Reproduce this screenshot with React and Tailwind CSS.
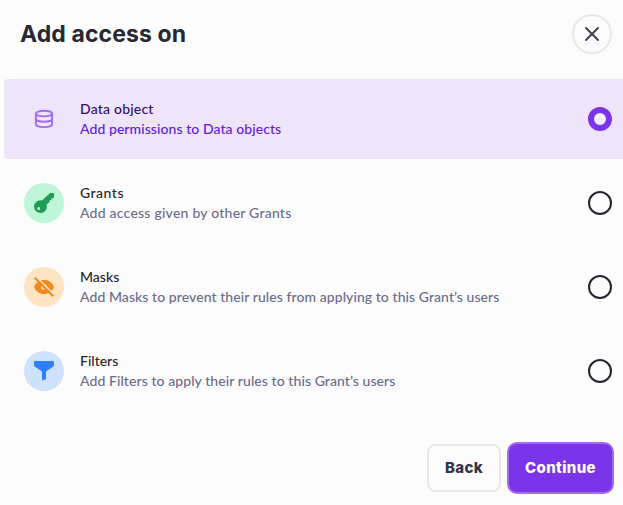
import React from "react";

function DatabaseIcon() {
  return (
    <svg width="20" height="20" viewBox="0 0 20 20" fill="none" stroke="#a06cf0" strokeWidth="1.9">
      <ellipse cx="10" cy="4.6" rx="8.1" ry="2.8" />
      <path d="M1.9 4.6v10.7c0 1.6 3.6 2.8 8.1 2.8s8.1-1.2 8.1-2.8V4.6M1.9 9.9c0 1.6 3.6 2.8 8.1 2.8s8.1-1.2 8.1-2.8" />
    </svg>
  );
}

function KeyIcon() {
  return (
    <svg width="20" height="20" viewBox="0 0 20 20" fill="#1f9d55">
      <path
        fillRule="evenodd"
        d="M16.2 0H19.4Q20 0 20 .6V4L18.9 5.6L17.5 5.1L17.4 7.3L15.8 6.9L15.6 9.1L12.5 11.6C13.2 13.8 12.8 15.9 11.3 17.8C9.1 20.3 5 20.8 2.4 18.6C-.4 16.2-.8 12.1 1.7 9.5C3.5 7.6 5.8 7 8 7.4ZM4.7 14A1.5 1.5 0 1 0 4.7 17A1.5 1.5 0 1 0 4.7 14Z"
      />
    </svg>
  );
}

function EyeOffIcon() {
  return (
    <svg width="20" height="20" viewBox="0 0 20 20">
      <path
        fill="#f18a20"
        fillRule="evenodd"
        d="M10 3C14.6 3 18.4 5.7 20 10C18.4 14.3 14.6 17 10 17S1.6 14.3 0 10C1.6 5.7 5.4 3 10 3ZM10 7.2A2.8 2.8 0 1 0 10 12.8A2.8 2.8 0 1 0 10 7.2Z"
      />
      <path d="M1.6-.8L20.8 18.4" stroke="#ffe4c2" strokeWidth="1.6" />
      <path d="M.8.8L19.2 19.2" stroke="#f18a20" strokeWidth="2.2" />
    </svg>
  );
}

function FilterIcon() {
  return (
    <svg width="20" height="20" viewBox="0 0 20 20" fill="#2f80f7">
      <path d="M1 0H19Q20 0 20 1V4.2Q20 5 19.3 5.5L12 10.6V17.6Q12 18.1 11.5 18.3L9 19.2Q8 19.5 8 18.6V10.6L.7 5.5Q0 5 0 4.2V1Q0 0 1 0Z" />
    </svg>
  );
}

const options = [
  {
    title: "Data object",
    text: "Add permissions to Data objects",
    icon: <DatabaseIcon />,
    selected: true,
    circle: "",
    titleTracking: "tracking-[0.2px]",
    textTracking: "tracking-[0.07px]",
  },
  {
    title: "Grants",
    text: "Add access given by other Grants",
    icon: <KeyIcon />,
    circle: "bg-[#bff6d8]",
    titleTracking: "tracking-[0.5px]",
    textTracking: "tracking-[0.23px]",
  },
  {
    title: "Masks",
    text: "Add Masks to prevent their rules from applying to this Grant’s users",
    icon: <EyeOffIcon />,
    circle: "bg-[#ffe4c2]",
    titleTracking: "tracking-[0px]",
    textTracking: "tracking-[0.07px]",
  },
  {
    title: "Filters",
    text: "Add Filters to apply their rules to this Grant’s users",
    icon: <FilterIcon />,
    circle: "bg-[#cfe2fd]",
    titleTracking: "tracking-[0px]",
    textTracking: "tracking-[0.08px]",
  },
];

function Option({ option }) {
  const { title, text, icon, selected, circle, titleTracking, textTracking } = option;
  return (
    <div
      className={`flex h-20 items-center rounded-l pr-[11px] pl-5 ${selected ? "bg-[#eee5fa]" : ""}`}
    >
      <div className={`flex size-10 shrink-0 items-center justify-center rounded-full ${circle}`}>{icon}</div>
      <div className="ml-4 flex-1 text-sm leading-5 font-medium whitespace-nowrap">
        <div className={selected ? "text-[#2e1065]" : "text-[#24242e]"}>
          <span className={titleTracking}>{title}</span>
        </div>
        <div className={selected ? "text-[#6518dc]" : "text-[#6d6b8a]"}>
          <span className={textTracking}>{text}</span>
        </div>
      </div>
      <span
        className={`size-6 shrink-0 rounded-full ${
          selected ? "border-[6px] border-[#7a35e8] bg-[#f6effe]" : "border-2 border-[#24242e]"
        }`}
      />
    </div>
  );
}

export default function App() {
  return (
    <div className="h-[505px] w-[623px] overflow-hidden bg-[#fcfcfc] font-['Lato',sans-serif]">
      <header className="flex h-[79px] items-start justify-between pt-3.5 pr-[11px] pl-5">
        <h1 className="font-['Inter',sans-serif] text-[23px] leading-10 font-bold text-[#282832]">
          <span className="tracking-[0.1px]">Add access on</span>
        </h1>
        <button className="flex size-10 items-center justify-center rounded-full border-2 border-[#e8e8e9]">
          <svg width="14" height="14" viewBox="0 0 14 14" stroke="#3c3a4c" strokeWidth="1.8" strokeLinecap="round">
            <path d="M1 1L13 13M13 1L1 13" />
          </svg>
        </button>
      </header>
      <main className="flex flex-col gap-1 pl-1">
        {options.map((option) => (
          <Option key={option.title} option={option} />
        ))}
      </main>
      <footer className="mt-[31px] flex items-center justify-end gap-1.5 pr-[9px] font-['Inter',sans-serif] text-[15px] font-extrabold">
        <button className="h-12 w-[74px] rounded-lg border-2 border-[#e8e8e9] text-[#36344a]">
          <span className="tracking-[0.3px]">Back</span>
        </button>
        <button className="h-[52px] w-[107px] rounded-[10px] border-2 border-[#a06cf0] bg-[#7a35e8] text-white">
          <span className="tracking-[0.35px]">Continue</span>
        </button>
      </footer>
    </div>
  );
}
